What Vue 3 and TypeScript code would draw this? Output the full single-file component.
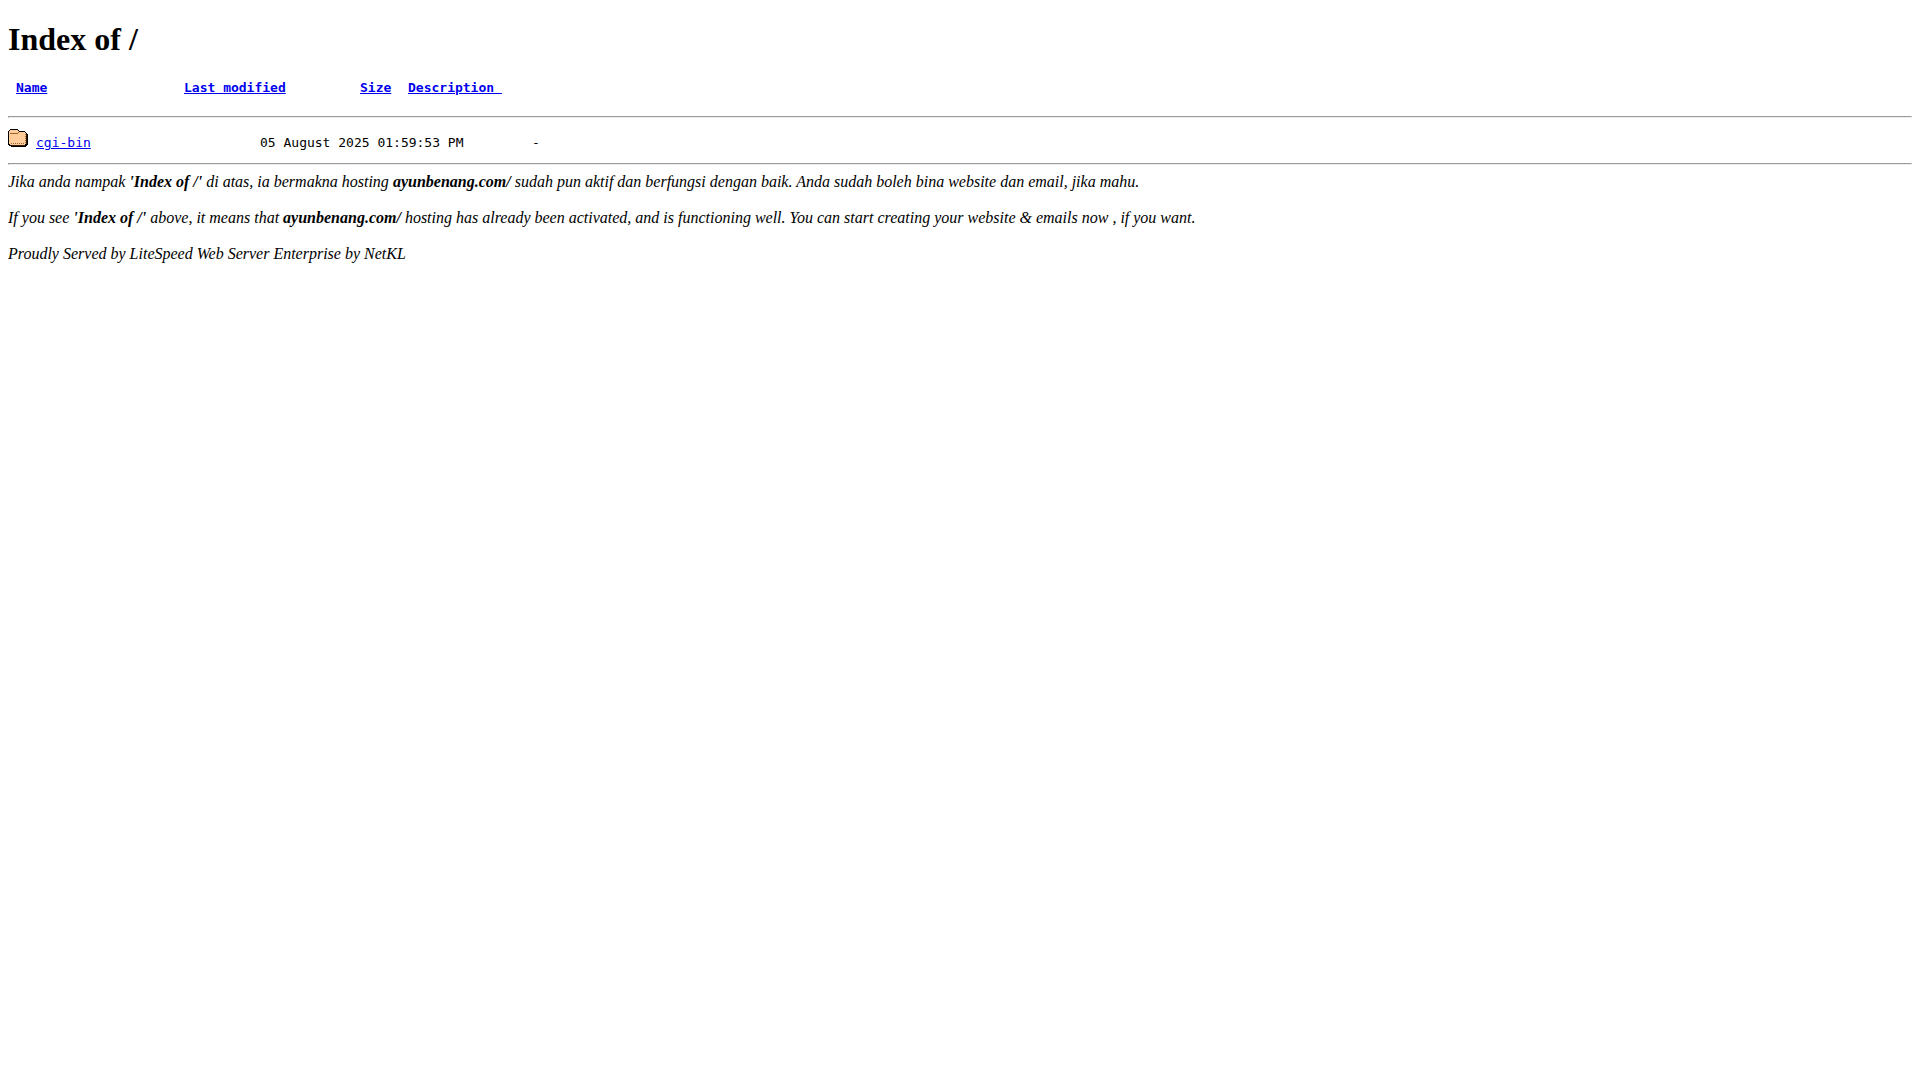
<script setup lang="ts">
const path = '/'
const site = 'ayunbenang.com/'

interface Entry {
  name: string
  href: string
  modified: string
  size: string
}

const entries: Entry[] = [
  { name: 'cgi-bin', href: '/cgi-bin/', modified: '05 August 2025 01:59:53 PM', size: '-' },
]
</script>

<template>
  <main>
    <h1>Index of {{ path }}</h1>
    <div class="listing">
      <div class="head">
        <span class="head-name"><a href="?ND">Name</a></span>
        <span class="head-modified"><a href="?MA">Last modified</a></span>
        <span class="head-size"><a href="?SA">Size</a></span>
        <span class="head-description"><a href="?DA">Description </a></span>
      </div>
      <hr>
      <div v-for="entry in entries" :key="entry.name" class="entry">
        <svg class="folder" width="20" height="22" viewBox="0 0 20 22" shape-rendering="crispEdges" role="img" aria-label="Folder">
          <path fill="#000" d="M2 4h8v1h1v1h6v1h1v1h1v1h1v11h-1v1h-1v1H3v-1H1v-1H0V6h1V5h1z" />
          <path fill="#ffcc99" d="M2 5h8v1h1v1h6v1h1v11h-1v1H2v-1H1V6h1z" />
          <path fill="#996633" d="M2 8h8v1H2zM10 7h1v1h-1zM17 9h1v1h-1zM17 11h1v1h-1zM17 13h1v1h-1zM17 15h1v1h-1zM17 17h1v1h-1zM3 18h1v1H3zM5 18h1v1H5zM7 18h1v1H7zM9 18h1v1H9zM11 18h1v1h-1zM13 18h1v1h-1zM15 18h1v1h-1z" />
          <path fill="#331a00" d="M18 9h1v10h-1zM4 20h13v1H4z" />
        </svg>
        <span class="entry-name"><a :href="entry.href">{{ entry.name }}</a></span>
        <span class="entry-modified">{{ entry.modified }}</span>
        <span>{{ entry.size }}</span>
      </div>
    </div>
    <hr>
    <address>
      Jika anda nampak <b>'Index of {{ path }}'</b> di atas, ia bermakna hosting <b>{{ site }}</b> sudah pun aktif dan berfungsi dengan baik. Anda sudah boleh bina website dan email, jika mahu.<br><br>
      If you see <b>'Index of {{ path }}'</b> above, it means that <b>{{ site }}</b> hosting has already been activated, and is functioning well. You can start creating your website &amp; emails now , if you want.<br><br>
      Proudly Served by LiteSpeed Web Server Enterprise by NetKL
    </address>
  </main>
</template>

<style>
body {
  margin: 8px;
  background: #fff;
  color: #000;
  font-family: "Liberation Serif", serif;
  font-size: 16px;
}
</style>

<style scoped>
h1 {
  margin: 13px 0 22px;
  font-size: 32px;
}

hr {
  margin: 8px 0;
  border: 1px solid;
  border-color: #9a9a9a #eee #eee #9a9a9a;
}

.listing {
  margin: 13px 0;
  font-family: "DejaVu Sans Mono", monospace;
  font-size: 13px;
  line-height: 15px;
  white-space: pre;
}

.listing hr {
  margin: 6px 0 7px;
}

.head {
  display: flex;
  padding: 0 8px 15px;
  font-weight: bold;
}

.head-name {
  width: 168px;
}

.head-modified {
  width: 176px;
}

.head-size {
  width: 48px;
}

.entry {
  display: flex;
  align-items: baseline;
}

.folder {
  margin-right: 8px;
}

.entry-name {
  width: 224px;
}

.entry-modified {
  width: 272px;
}

a {
  color: #0000ee;
}
</style>
